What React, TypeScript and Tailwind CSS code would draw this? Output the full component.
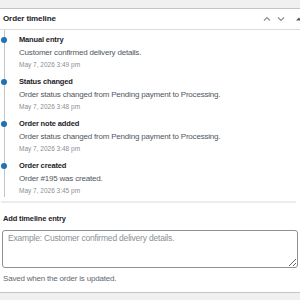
const entries = [
  { title: "Manual entry", text: "Customer confirmed delivery details.", date: "May 7, 2026 3:49 pm" },
  { title: "Status changed", text: "Order status changed from Pending payment to Processing.", date: "May 7, 2026 3:48 pm" },
  { title: "Order note added", text: "Order status changed from Pending payment to Processing.", date: "May 7, 2026 3:48 pm" },
  { title: "Order created", text: "Order #195 was created.", date: "May 7, 2026 3:45 pm" },
];

function App() {
  return (
    <div className="w-[300px] h-[300px] overflow-hidden bg-[#f0f0f1] pt-[8px] font-['Liberation_Sans',Arial,sans-serif]">
      <div className="-ml-[9px] w-[318px] h-[285px] bg-white border border-[#c3c4c7]">
        {/* header */}
        <div className="h-[21px] flex items-center justify-between pl-[11px] border-b border-[#dcdcde]">
          <h2 className="text-[8px] font-bold tracking-[-0.1px] text-[#1d2327] leading-none">Order timeline</h2>
          <div className="flex items-center text-[#8c8f94]">
            <svg width="14" height="10" viewBox="0 0 14 10">
              <path d="M4 6.5 L7 3.5 L10 6.5" fill="none" stroke="currentColor" strokeWidth="1.2" />
            </svg>
            <svg width="14" height="10" viewBox="0 0 14 10">
              <path d="M4 3.5 L7 6.5 L10 3.5" fill="none" stroke="currentColor" strokeWidth="1.2" />
            </svg>
            <svg width="20" height="10" viewBox="0 0 20 10">
              <path d="M8 6.5 L11 3.5 L14 6.5 Z" fill="#50575e" />
            </svg>
          </div>
        </div>

        <div className="pl-[12px] pr-[12px]">
          {/* timeline */}
          <div className="relative pt-[3px]">
            <div className="absolute left-0 top-0 bottom-[4px] w-px bg-[#c3c4c7]" />
            {entries.map((e) => (
              <div key={e.title} className="relative pl-[15px] h-[42px]">
                <span className="absolute -left-[3px] top-[3.5px] w-[6px] h-[6px] rounded-full bg-[#2271b1]" />
                <p className="text-[7.5px] font-bold tracking-[-0.15px] text-[#1d2327] leading-[13px]">{e.title}</p>
                <p className="text-[8px] tracking-[-0.2px] text-[#50575e] leading-[13px] whitespace-nowrap">{e.text}</p>
                <p className="text-[6.5px] text-[#8c8f94] leading-[12px]">{e.date}</p>
              </div>
            ))}
          </div>

          {/* add entry */}
          <div className="-ml-[3px] border-t-2 border-[#ececec] pl-[2px] pt-[9px]">
            <p className="text-[7.5px] font-bold tracking-[-0.15px] text-[#1d2327] leading-[13px]">Add timeline entry</p>
            <textarea
              className="mt-[5px] -ml-px block w-[296px] h-[38px] border border-[#8c8f94] rounded-[3px] px-[5px] py-[1px] text-[8.5px] tracking-[-0.2px] leading-[12px] text-[#1d2327] placeholder:text-[#8c8f94] font-['Liberation_Sans',Arial,sans-serif]"
              placeholder="Example: Customer confirmed delivery details."
            />
            <p className="mt-[5px] text-[8px] tracking-[-0.2px] text-[#646970] leading-[12px]">Saved when the order is updated.</p>
          </div>
        </div>
      </div>
    </div>
  );
}

export default App;
